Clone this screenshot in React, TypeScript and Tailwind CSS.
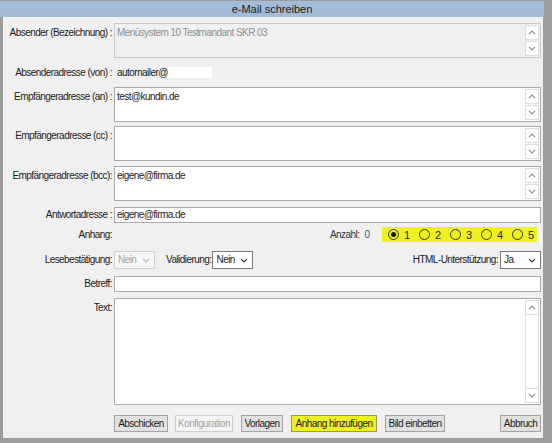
import React from "react";

const txt = "text-[10px] leading-[12px] tracking-[-0.55px] text-[#1b1b1b]";

function Chevron({ up, color = "#8a8a8a" }: { up?: boolean; color?: string }) {
  return (
    <svg width="8" height="5" viewBox="0 0 8 5" className="block">
      <polyline
        points={up ? "1,4.2 4,1 7,4.2" : "1,0.8 4,4 7,0.8"}
        fill="none"
        stroke={color}
        strokeWidth="1.1"
      />
    </svg>
  );
}

function SpinButtons() {
  return (
    <div className="flex w-[15px] flex-col gap-[1px] py-[1px] pr-[1px]">
      <div className="flex h-[16px] items-center justify-center border border-[#dedede] bg-white">
        <Chevron up />
      </div>
      <div className="flex h-[16px] items-center justify-center border border-[#dedede] bg-white">
        <Chevron />
      </div>
    </div>
  );
}

function MultiBox({ value, disabled }: { value?: string; disabled?: boolean }) {
  return (
    <div
      className={`flex h-[35px] flex-1 border ${
        disabled ? "border-[#c9c9c9] bg-[#f0f0f0]" : "border-[#a9a9a9] bg-white"
      }`}
    >
      <div
        className={`flex-1 px-[2px] pt-[3px] ${txt} ${disabled ? "text-[#8e8e8e]" : ""}`}
      >
        {value}
      </div>
      <SpinButtons />
    </div>
  );
}

function Label({ children, top }: { children: React.ReactNode; top?: boolean }) {
  return (
    <div
      className={`w-[111px] shrink-0 pr-[2px] text-right whitespace-nowrap ${txt} ${
        top ? "pt-[4px]" : ""
      }`}
    >
      {children}
    </div>
  );
}

function Select({
  value,
  disabled,
  w,
}: {
  value: string;
  disabled?: boolean;
  w: string;
}) {
  return (
    <div
      className={`flex h-[18px] items-center justify-between border pl-[3px] pr-[4px] ${w} ${
        disabled ? "border-[#d0d0d0] bg-[#f7f7f7]" : "border-[#7a7a7a] bg-white"
      }`}
    >
      <span className={`${txt} ${disabled ? "text-[#a3a3a3]" : ""}`}>{value}</span>
      <Chevron color={disabled ? "#b5b5b5" : "#333333"} />
    </div>
  );
}

function Radio({ n, checked }: { n: number; checked?: boolean }) {
  return (
    <div className="flex items-center gap-[3px]">
      <div className="flex h-[11px] w-[11px] items-center justify-center rounded-full border border-[#333333]">
        {checked && <div className="h-[5px] w-[5px] rounded-full bg-[#111111]" />}
      </div>
      <span className="w-[10px] text-center text-[11px] leading-[12px] text-[#1b1b1b]">{n}</span>
    </div>
  );
}

function Btn({
  children,
  w,
  disabled,
  yellow,
}: {
  children: React.ReactNode;
  w: string;
  disabled?: boolean;
  yellow?: boolean;
}) {
  return (
    <div
      className={`flex h-[17px] items-center justify-center border ${w} ${
        disabled
          ? "border-[#cfcfcf] bg-[#f4f4f4] text-[#a5a5a5]"
          : yellow
          ? "border-[#9a9a50] bg-[#eef12a]"
          : "border-[#a3a3a3] bg-[#e1e1e1]"
      }`}
    >
      <span className={`${txt} ${disabled ? "text-[#a5a5a5]" : ""}`}>{children}</span>
    </div>
  );
}

export default function App() {
  return (
    <div className="flex h-[443px] w-[552px] flex-col bg-[#9c9c9c] pt-[1px] pb-[5px] pl-[3px] pr-[9px] font-['Liberation_Sans',Arial,sans-serif]">
      {/* Title bar */}
      <div className="-ml-[3px] -mr-[1px] flex h-[16px] items-center justify-center bg-[#a3bbd8]">
        <span className="text-[11px] leading-[12px] text-[#1a1a1a]">e-Mail schreiben</span>
      </div>

      <div className="flex flex-1 flex-col bg-[#f0f0f0] pt-[6px] pr-[2px]">
        {/* Absender */}
        <div className="flex">
          <Label top>Absender (Bezeichnung) :</Label>
          <MultiBox value="Menüsystem 10 Testmandant SKR 03" disabled />
        </div>

        {/* Absenderadresse */}
        <div className="mt-[8px] flex h-[13px] items-center">
          <Label>Absenderadresse (von) :</Label>
          <span className={`ml-[3px] ${txt}`}>automailer@</span>
          <div className="h-[11px] w-[44px] bg-white" />
        </div>

        <div className="mt-[8px] flex">
          <Label top>Empfängeradresse (an) :</Label>
          <MultiBox value="test@kundin.de" />
        </div>

        <div className="mt-[4px] flex">
          <Label top>Empfängeradresse (cc) :</Label>
          <MultiBox />
        </div>

        <div className="mt-[5px] flex">
          <Label top>Empfängeradresse (bcc):</Label>
          <MultiBox value="eigene@firma.de" />
        </div>

        <div className="mt-[6px] flex items-center">
          <Label>Antwortadresse :</Label>
          <div className={`flex h-[16px] flex-1 items-center border border-[#a9a9a9] bg-white px-[2px] ${txt}`}>
            eigene@firma.de
          </div>
        </div>

        {/* Anhang */}
        <div className="mt-[4px] flex h-[15px] items-center">
          <Label>Anhang:</Label>
          <div className="flex-1" />
          <span className={`${txt} text-[#333333]`}>Anzahl:</span>
          <span className="ml-[5px] text-[10px] leading-[12px] text-[#4a5a8a]">0</span>
          <div className="mr-[4px] ml-[12px] flex h-[15px] items-center gap-[7px] bg-[#f0f21e] pl-[6px] pr-[1px]">
            <Radio n={1} checked />
            <Radio n={2} />
            <Radio n={3} />
            <Radio n={4} />
            <Radio n={5} />
          </div>
        </div>

        {/* Lesebestätigung */}
        <div className="mt-[9px] flex items-center">
          <Label>Lesebestätigung:</Label>
          <Select value="Nein" disabled w="w-[41px]" />
          <span className={`ml-[11px] mr-[1px] ${txt}`}>Validierung:</span>
          <Select value="Nein" w="w-[41px]" />
          <div className="flex-1" />
          <span className={`mr-[2px] ${txt}`}>HTML-Unterstützung:</span>
          <Select value="Ja" w="w-[41px]" />
        </div>

        <div className="mt-[7px] flex items-center">
          <Label>Betreff:</Label>
          <div className="h-[16px] flex-1 border border-[#a9a9a9] bg-white" />
        </div>

        {/* Text */}
        <div className="mt-[6px] flex">
          <Label top>Text:</Label>
          <div className="flex h-[107px] flex-1 border border-[#a9a9a9] bg-white">
            <div className="flex-1" />
            <div className="flex w-[15px] flex-col py-[1px] pr-[1px]">
              <div className="flex h-[15px] items-center justify-center border border-[#dedede] bg-white">
                <Chevron up />
              </div>
              <div className="flex-1 border-x border-[#e4e4e4] bg-white" />
              <div className="flex h-[15px] items-center justify-center border border-[#dedede] bg-white">
                <Chevron />
              </div>
            </div>
          </div>
        </div>

        {/* Buttons */}
        <div className="mt-[10px] flex items-center pl-[111px]">
          <Btn w="w-[54px]">Abschicken</Btn>
          <div className="w-[7px]" />
          <Btn w="w-[58px]" disabled>
            Konfiguration
          </Btn>
          <div className="w-[8px]" />
          <Btn w="w-[42px]">Vorlagen</Btn>
          <div className="w-[8px]" />
          <Btn w="w-[86px]" yellow>
            Anhang hinzufügen
          </Btn>
          <div className="w-[8px]" />
          <Btn w="w-[60px]">Bild einbetten</Btn>
          <div className="flex-1" />
          <Btn w="w-[41px]">Abbruch</Btn>
        </div>
      </div>
    </div>
  );
}
